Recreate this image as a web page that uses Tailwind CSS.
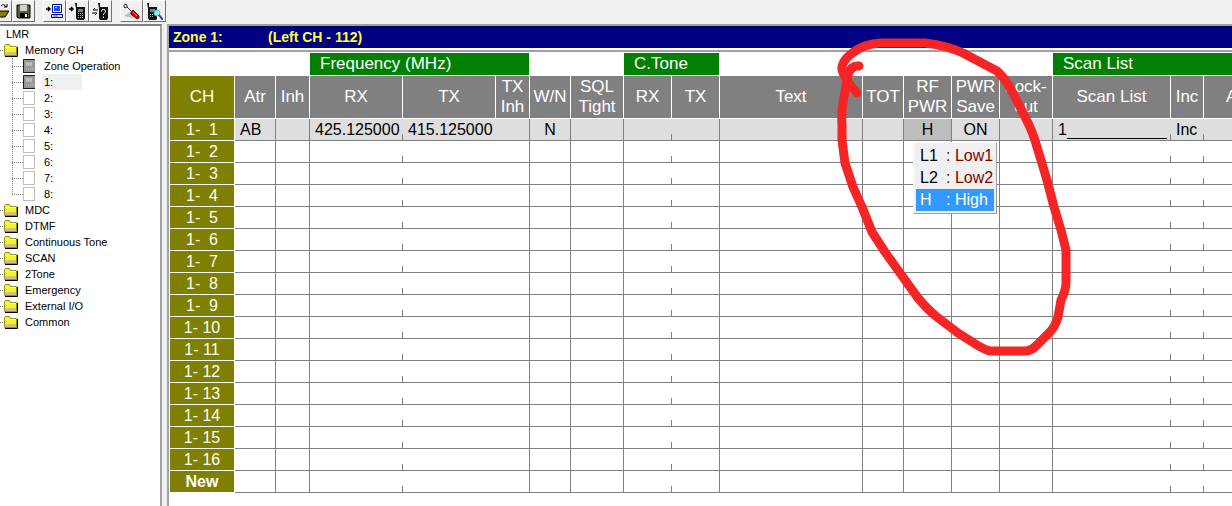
<!DOCTYPE html>
<html lang="en">
<head>
  <meta charset="UTF-8">
  <meta name="viewport" content="width=device-width, initial-scale=1.0">
  <title>LMR Programmer</title>
  <script src="https://cdn.jsdelivr.net/npm/@tailwindcss/browser@4"></script>
</head>
<body class="h-screen flex flex-col overflow-hidden bg-[#f0f0f0] text-black font-['Liberation_Sans',Arial,sans-serif]">
  <!-- Toolbar -->
  <header id="toolbar" class="flex shrink-0 h-6 -ml-[11px]"></header>

  <div class="flex flex-1 min-h-0">
    <!-- Tree -->
    <nav class="w-[162px] shrink-0 bg-white border-t-2 border-r-2 border-t-[#808080] border-r-[#a0a0a0] text-[11px] leading-4 overflow-hidden">
      <a href="#" class="block pl-[6px]">LMR</a>
      <ul id="tree"></ul>
    </nav>

    <!-- Channel sheet -->
    <main class="relative flex-1 min-w-0 ml-[5px] border-l-2 border-t-2 border-[#a0a0a0] bg-white overflow-hidden">
      <h1 class="flex h-[22px] items-center bg-[#000080] pl-1 text-[14px] font-bold text-[#ffff40]">
        <span class="w-[95px]">Zone 1:</span>
        <span>(Left CH - 112)</span>
      </h1>
      <div class="mt-[2px] border-t-2 border-[#a0a0a0] pt-px pl-px">
        <table class="table-fixed border-separate border-spacing-0 w-[1160px] text-[16px] leading-5">
          <colgroup>
            <col class="w-[65px]"><col class="w-[41px]"><col class="w-[34px]"><col class="w-[93px]">
            <col class="w-[93px]"><col class="w-[34px]"><col class="w-[41px]"><col class="w-[53px]">
            <col class="w-[48px]"><col class="w-[48px]"><col class="w-[143px]"><col class="w-[41px]">
            <col class="w-[48px]"><col class="w-[48px]"><col class="w-[53px]"><col class="w-[118px]">
            <col class="w-[33px]"><col class="w-[126px]">
          </colgroup>
          <thead class="text-[17px] text-white">
            <tr class="h-[23px]">
              <td colspan="3" class="p-0"></td>
              <th colspan="3" class="bg-[#008000] border-b border-r border-white p-0 pl-[10px] text-left font-normal">Frequency (MHz)</th>
              <td colspan="2" class="p-0"></td>
              <th colspan="2" class="bg-[#008000] border-b border-r border-white p-0 pl-[10px] text-left font-normal">C.Tone</th>
              <td colspan="5" class="p-0"></td>
              <th colspan="3" class="bg-[#008000] border-b border-r border-white p-0 pl-[10px] text-left font-normal">Scan List</th>
            </tr>
            <tr id="heads" class="h-[43px]"></tr>
          </thead>
          <tbody id="rows"></tbody>
        </table>
      </div>
    </main>
  </div>

  <!-- Hand-drawn marker -->
  <svg class="pointer-events-none absolute left-0 top-0 w-[1232px] h-[506px]" viewBox="0 0 1232 506" fill="none" stroke="#f52525" stroke-width="9" stroke-linecap="round" stroke-linejoin="round">
    <path d="M859 66Q851 65 848 75L844 97Q841 110 842 125V140L845 163L853 187L862 207L872 232L885 252L900 273L918 298Q928 310 937 317L958 333L977 345Q985 350 990 351H1027Q1032 350 1036 346L1050 332Q1056 325 1058 317L1061 300Q1066 290 1066 283V250L1061 230L1054 207L1047 180L1037 147Q1033 132 1025 117L1013 93Q1005 78 997 71L963 53Q945 45 925 43H880Q863 44 851 54Q841 62 842 70Q844 78 857 93"/>
  </svg>

  <script>
    const icons = {
      open: `<path d="M2 4h5l1 2h5v3H2z" fill="#ff9"/><path d="M1 14l3-6h13l-4 6z" fill="#808000" stroke="#000"/><path d="M9 3q3-3 5 1M12 4h3V1" fill="none" stroke="#000"/>`,
      save: `<path d="M2 2h13v13H3l-1-1z" fill="#606038" stroke="#000"/><path d="M5 2h7v6H5z" fill="#d0d0c8"/><path d="M5 10h8v5H5z" fill="#000"/><path d="M10 11h2v3h-2z" fill="#fff"/>`,
      pc: `<path d="M0 6h4M2 4l2 2-2 2" fill="none" stroke="#000" stroke-width="1.5"/><path d="M6.500 1.500h9v8h-9z" fill="#fff" stroke="#000080"/><path d="M8 3h6v5H8z" fill="#1050ff"/><path d="M9 4h2v1H9z" fill="#9cf"/><path d="M5.500 11.500h11v3h-11z" fill="#e8e8e8" stroke="#000080"/><path d="M7 13h5" stroke="#1464ff"/>`,
      write: `<path d="M0 6h4M2 4l2 2-2 2" fill="none" stroke="#000" stroke-width="1.5"/><path d="M6 0h2v4h8v11l-1 2H8l-1-2V5z" fill="#111"/><path d="M9 6h5v3H9z" fill="#3b9888"/><path d="M9 10h1v1H9zm2 0h1v1h-1zm2 0h1v1h-1zm-4 2h1v1H9zm2 0h1v1h-1zm2 0h1v1h-1zm-4 2h1v1H9zm2 0h1v1h-1zm2 0h1v1h-1z" fill="#aaa"/>`,
      verify: `<path d="M1 7h5M3 5L1 7M0 10h5M3 12l2-2" fill="none" stroke="#000"/><path d="M6 0h2v4h8v11l-1 2H8l-1-2V5z" fill="#111"/><path d="M9.500 8.500V7.500q0-1 2-1t2 1.500-2 3v1M11.500 13.500v1.500" fill="none" stroke="#fff"/>`,
      tool: `<path d="M1 13l6-4 5 5-3 1z" fill="#c0c0c0"/><path d="M1 2l2-1 1 1v2l-2 1-1-1zM4 4l5 5" fill="none" stroke="#333"/><path d="M8 9l2-2 6 6v2l-2 1-6-5z" fill="#d80000" stroke="#600"/><path d="M10 9l4 4" stroke="#ff9080"/>`,
      find: `<path d="M1 0h2v4h8v12l-1 1H3l-1-2V5z" fill="#111"/><path d="M4 6h5v3H4z" fill="#3b9888"/><path d="M4 11h1v1H4zm2 0h1v1H6zm-2 2h1v1H4zm2 0h1v1H6z" fill="#aaa"/><circle cx="11" cy="10" r="3" fill="#80f0ff" stroke="#60b0c8"/><path d="M13 12l4 5" stroke="#1040c0" stroke-width="2"/>`
    };

    const folder = `<svg class="shrink-0" width="16" height="14" viewBox="0 0 16 14">
      <path d="M1.500 12.500v-10l1-1h4l1 2h6v9z" fill="#f4f428" stroke="#909020"/>
      <path d="M2 4.500h11" stroke="#ffffc0"/><path d="M2 9h11v3H2z" fill="#d0c878"/>
      <path d="M2 13.500h12.500V4" fill="none" stroke="#000"/></svg>`;
    const zone = `<svg class="shrink-0" width="12" height="14" viewBox="0 0 12 14">
      <path d="M0 0h12v14H0z" fill="#989898"/><path d="M.5 14V.5H12M0 13.500h12" fill="none" stroke="#202020"/>
      <path d="M3 3h6v4H3z" fill="#bcbcbc"/><path d="M3 10h7" stroke="#c0c0c0" stroke-dasharray="1 1"/></svg>`;
    const blank = `<span class="w-3 h-[14px] shrink-0 border border-[#c0c0c0] bg-white"></span>`;

    function toolButton(name, label) {
      return `<button aria-label="${label}" class="flex w-[23px] h-[22px] items-center justify-center border border-t-white border-l-white border-r-[#707070] border-b-[#707070]">
        <svg width="17" height="17" viewBox="0 0 17 17">${icons[name]}</svg></button>`;
    }

    const gap = '<span class="w-2"></span>';
    document.getElementById('toolbar').innerHTML =
      toolButton('open', 'Open') + toolButton('save', 'Save') + gap +
      toolButton('pc', 'Read') + toolButton('write', 'Write') + toolButton('verify', 'Verify') + gap +
      toolButton('tool', 'Settings') + toolButton('find', 'Find');

    const zones = ['Zone Operation', '1:', '2:', '3:', '4:', '5:', '6:', '7:', '8:'];
    const zoneItems = zones.map((name, i) => `
      <li class="flex h-4 items-center">
        <span class="w-[11px] border-t border-dotted border-[#808080]"></span>
        ${i < 2 ? zone : blank}
        <a href="#" class="${i === 1 ? 'ml-[7px] w-10 bg-[#f0f0f0] pl-[2px]' : 'ml-[7px] pl-[2px]'}">${name}</a>
      </li>`).join('');

    const groups = ['Memory CH', 'MDC', 'DTMF', 'Continuous Tone', 'SCAN', '2Tone', 'Emergency', 'External I/O', 'Common'];
    document.getElementById('tree').innerHTML = groups.map((name, i) => `
      <li>
        <div class="flex h-4 items-center">
          <span class="w-[3px] border-t border-dotted border-[#808080]"></span>
          ${folder}
          <a href="#" class="ml-[6px]">${name}</a>
        </div>
        ${i === 0 ? `<div class="relative pl-3 before:absolute before:left-3 before:top-0 before:bottom-2 before:border-l before:border-dotted before:border-[#808080]"><ul>${zoneItems}</ul></div>` : ''}
      </li>`).join('');

    const heads = ['CH', 'Atr', 'Inh', 'RX', 'TX', 'TX<br>Inh', 'W/N', 'SQL<br>Tight', 'RX', 'TX', 'Text', 'TOT',
      'RF<br>PWR', 'PWR<br>Save', 'Lock-<br>out', 'Scan List', 'Inc', 'A'];
    document.getElementById('heads').innerHTML = heads.map((text, i) => {
      const fill = i === 0 ? 'bg-[#808000]' : 'bg-[#808080]';
      const align = i === 17 ? 'text-left pl-[22px]' : 'text-center';
      return `<th class="${fill} ${align} border-r border-b border-white p-0 font-normal whitespace-nowrap">${text}</th>`;
    }).join('');

    const menu = `
      <div role="menu" class="absolute z-10 left-[9px] top-[23px] w-[84px] border border-t-white border-l-white border-r-[#a0a0a0] border-b-[#a0a0a0] bg-[#f0f0f0] p-[2px]">
        <button role="menuitem" class="flex w-full h-[22px] items-center pl-1 text-left"><span class="w-[26px]">L1</span><span class="text-[#800000]">: Low1</span></button>
        <button role="menuitem" class="flex w-full h-[22px] items-center pl-1 text-left"><span class="w-[26px]">L2</span><span class="text-[#800000]">: Low2</span></button>
        <button role="menuitem" class="flex w-full h-[22px] items-center pl-1 text-left bg-[#3399ff] text-white"><span class="w-[26px]">H</span><span>: High</span></button>
      </div>`;

    // one entry per data column after CH
    const first = ['AB', '', '425.125000', '415.125000', '', 'N', '', '', '', '', '', 'H', 'ON', '',
      '<label class="flex">1<input aria-label="Scan list name" class="h-[19px] w-[100px] border-b border-black outline-none"></label>', 'Inc', ''];
    const ticks = [2, 7, 14, 15];   // cells that share a field, split by a short tick
    const open = [3];

    function cell(i, isFirst) {
      let edge = 'border-r';
      if (ticks.includes(i)) edge = 'pr-px after:absolute after:right-0 after:bottom-0 after:h-[6px] after:w-px after:bg-[#808080]';
      if (open.includes(i)) edge = 'pr-px';
      let fill = 'bg-white';
      if (isFirst) fill = i === 11 ? 'bg-[#bdbdbd]' : 'bg-[#dedede]';
      const align = [5, 11, 12].includes(i) ? 'text-center' : 'pl-[5px]';
      return `<td class="relative p-0 border-b border-[#808080] whitespace-nowrap ${fill} ${edge} ${align}">${isFirst ? first[i] : ''}${isFirst && i === 11 ? menu : ''}</td>`;
    }

    let html = '';
    for (let n = 1; n <= 17; n++) {
      const name = n === 17 ? 'New' : '1-' + String(n).padStart(3, ' ');
      html += `<tr class="h-[22px]">
        <th class="${n === 17 ? 'font-bold' : 'font-normal'} bg-[#808000] border-r border-b border-white p-0 text-center text-white whitespace-pre">${name}</th>
        ${first.map((_, i) => cell(i, n === 1)).join('')}
      </tr>`;
    }
    document.getElementById('rows').innerHTML = html;
  </script>
</body>
</html>
